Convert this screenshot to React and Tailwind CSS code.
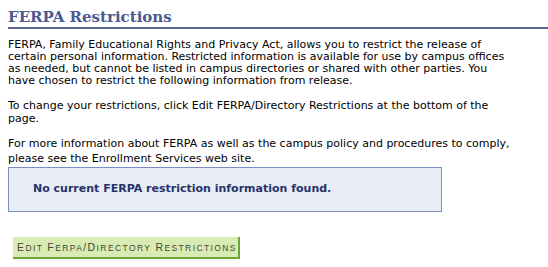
const words = ["Edit", "FERPA/Directory", "Restrictions"];

function SmallCaps({ word }) {
  // first letter of each part full size, rest as smaller capitals
  const parts = word.split("/");
  return parts.map((p, i) => (
    <span key={i}>
      {i > 0 && <span className="text-[10.5px]">/</span>}
      <span className="text-[10.5px]">{p[0].toUpperCase()}</span>
      <span className="text-[8.5px] uppercase">{p.slice(1)}</span>
    </span>
  ));
}

export default function App() {
  return (
    <div className="w-[548px] h-[267px] bg-white pl-2 pt-[8px] overflow-hidden">
      <h1 className="text-[15px] leading-[18px] font-bold text-[#4b598f] border-b-2 border-[#5f6496] pb-[1px] font-['DejaVu_Serif',Georgia,serif]">
        FERPA Restrictions
      </h1>

      <div className="font-['DejaVu_Sans',Verdana,sans-serif] text-[11px] leading-[12px] text-black whitespace-nowrap">
        <p className="mt-[10px]">
          FERPA, Family Educational Rights and Privacy Act, allows you to restrict the release of
          <br />
          certain personal information. Restricted information is available for use by campus offices
          <br />
          as needed, but cannot be listed in campus directories or shared with other parties. You
          <br />
          have chosen to restrict the following information from release.
        </p>
        <p className="mt-[12px] leading-[13px]">
          To change your restrictions, click Edit FERPA/Directory Restrictions at the bottom of the
          <br />
          page.
        </p>
        <p className="mt-[11px] leading-[15px]">
          For more information about FERPA as well as the campus policy and procedures to comply,
          <br />
          please see the Enrollment Services web site.
        </p>
      </div>

      <div className="w-[434px] h-[45px] mt-[1px] bg-[#e8edf5] border border-[#7c8dc5] flex items-center pl-[24px]">
        <span className="font-['DejaVu_Sans',Verdana,sans-serif] font-bold text-[11px] text-[#26336b]">
          No current FERPA restriction information found.
        </span>
      </div>

      <div className="mt-[25px] pl-[5px]">
        <button className="h-[22px] pl-[4px] pr-[1px] bg-[#d9ebb4] border-r-2 border-b-2 border-[#6aa83a] font-['Liberation_Sans',Arial,sans-serif] tracking-[1.4px] text-[#3b4a2e] leading-[18px] flex items-center">
          {words.map((w, i) => (
            <span key={w} className={i > 0 ? "ml-[4px]" : ""}>
              <SmallCaps word={w} />
            </span>
          ))}
        </button>
      </div>
    </div>
  );
}
